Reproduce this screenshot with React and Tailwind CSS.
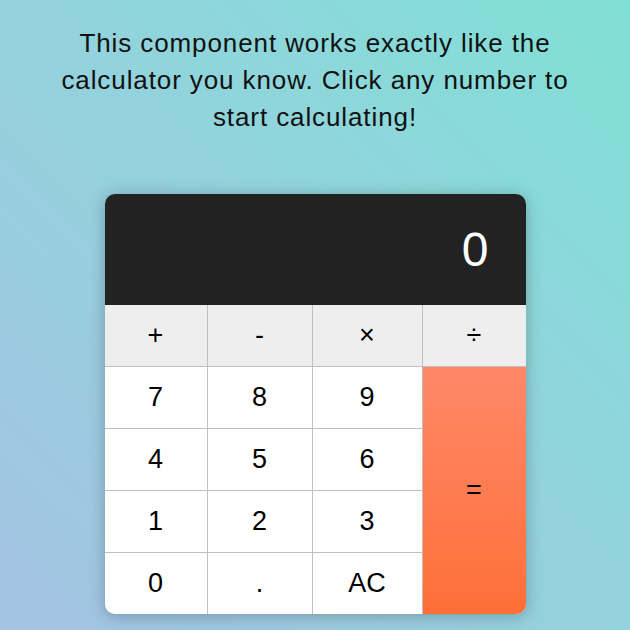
import React, { useState } from "react";

const keyBase =
  "flex items-center justify-center text-[27px] text-black select-none";

export default function App() {
  const [display, setDisplay] = useState("0");

  const press = (k) => {
    if (k === "AC") return setDisplay("0");
    if (k === "=") return;
    setDisplay((d) => (d === "0" && k !== "." ? k : d + k));
  };

  const ops = ["+", "-", "×", "÷"];
  const nums = [
    ["7", "8", "9"],
    ["4", "5", "6"],
    ["1", "2", "3"],
    ["0", ".", "AC"],
  ];

  return (
    <div
      className="min-h-[630px] w-full bg-gradient-to-tr from-[#a3c3e3] to-[#80e0d6] pt-[25px]"
      style={{ fontFamily: '"Liberation Sans", Arial, sans-serif' }}
    >
      <p className="mx-auto w-[540px] text-center text-[26px] leading-[37px] tracking-[0.9px] text-[#111]">
        This component works exactly like the calculator you know. Click any
        number to start calculating!
      </p>

      <div className="mx-auto mt-[58px] w-[421px] overflow-hidden rounded-[10px] shadow-[0_2px_16px_rgba(0,0,0,0.25)]">
        {/* display */}
        <div className="flex h-[111px] items-center justify-end bg-[#222222] pr-[37px] text-[48px] text-white">
          {display}
        </div>

        {/* keypad */}
        <div className="grid grid-cols-[102px_104px_109px_103px] grid-rows-[61px_61px_61px_61px_61px] gap-px bg-[#c0c0c0]">
          {ops.map((o) => (
            <button
              key={o}
              onClick={() => press(o)}
              className={`${keyBase} bg-[#eeeeee]`}
            >
              {o}
            </button>
          ))}

          {nums[0].map((n) => (
            <button key={n} onClick={() => press(n)} className={`${keyBase} bg-white`}>
              {n}
            </button>
          ))}
          <button
            onClick={() => press("=")}
            className={`${keyBase} col-start-4 row-span-4 row-start-2 bg-gradient-to-b from-[#ff8868] to-[#ff6f36]`}
          >
            =
          </button>
          {nums.slice(1).flat().map((n) => (
            <button key={n} onClick={() => press(n)} className={`${keyBase} bg-white`}>
              {n}
            </button>
          ))}
        </div>
      </div>
    </div>
  );
}
